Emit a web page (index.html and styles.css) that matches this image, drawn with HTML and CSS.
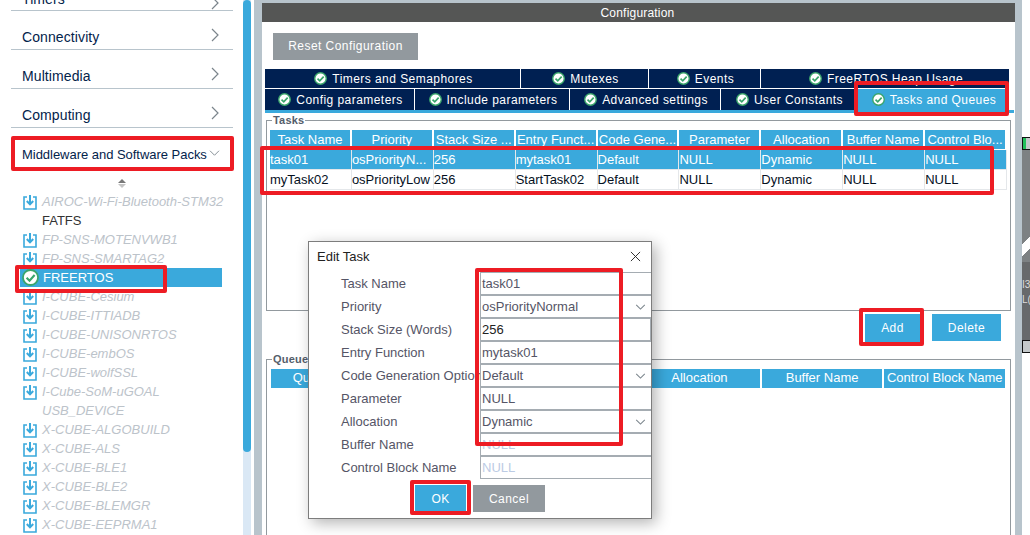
FILE: index.html
```html
<!DOCTYPE html>
<html lang="en">
<head>
    <meta charset="UTF-8">
    <meta name="viewport" content="width=device-width, initial-scale=1.0">
    <title>Edit Task</title>
    <link rel="stylesheet" href="styles.css">
</head>
<body>
    <svg class="defs" width="0" height="0">
        <symbol id="tick" viewBox="0 0 14 14">
            <circle cx="7" cy="7" r="6.2" fill="#fff" stroke="#3aa56b" stroke-width="1.5"/>
            <path d="M3.8 7.2 6.2 9.6 10.4 5" fill="none" stroke="#3aa56b" stroke-width="1.8"/>
        </symbol>
        <symbol id="pack" viewBox="0 0 14 16">
            <path d="M4 3H1v12h12V3h-3" fill="none" stroke="#3aa9dc" stroke-width="1.6"/>
            <path d="M7 1v9M3.8 7 7 10.4 10.2 7" fill="none" stroke="#3aa9dc" stroke-width="2"/>
        </symbol>
    </svg>

    <aside class="sidebar">
        <div class="cat cat-clipped"><span>Timers</span><svg class="chev" viewBox="0 0 8 14"><path d="M1 1l6 6-6 6"/></svg></div>
        <div class="cat"><span>Connectivity</span><svg class="chev" viewBox="0 0 8 14"><path d="M1 1l6 6-6 6"/></svg></div>
        <div class="cat"><span>Multimedia</span><svg class="chev" viewBox="0 0 8 14"><path d="M1 1l6 6-6 6"/></svg></div>
        <div class="cat"><span>Computing</span><svg class="chev" viewBox="0 0 8 14"><path d="M1 1l6 6-6 6"/></svg></div>
        <div class="cat cat-open"><span>Middleware and Software Packs</span><svg class="chev chev-down" viewBox="0 0 14 8"><path d="M1 1l6 6 6-6"/></svg></div>

        <div class="sorter"><i class="up"></i><i class="down"></i></div>
        <ul class="packs">
            <li><svg class="ico"><use href="#pack"/></svg>AIROC-Wi-Fi-Bluetooth-STM32</li>
            <li class="plain">FATFS</li>
            <li><svg class="ico"><use href="#pack"/></svg>FP-SNS-MOTENVWB1</li>
            <li><svg class="ico"><use href="#pack"/></svg>FP-SNS-SMARTAG2</li>
            <li class="selected"><svg class="ico ico-tick"><use href="#tick"/></svg>FREERTOS</li>
            <li><svg class="ico"><use href="#pack"/></svg>I-CUBE-Cesium</li>
            <li><svg class="ico"><use href="#pack"/></svg>I-CUBE-ITTIADB</li>
            <li><svg class="ico"><use href="#pack"/></svg>I-CUBE-UNISONRTOS</li>
            <li><svg class="ico"><use href="#pack"/></svg>I-CUBE-embOS</li>
            <li><svg class="ico"><use href="#pack"/></svg>I-CUBE-wolfSSL</li>
            <li><svg class="ico"><use href="#pack"/></svg>I-Cube-SoM-uGOAL</li>
            <li>USB_DEVICE</li>
            <li><svg class="ico"><use href="#pack"/></svg>X-CUBE-ALGOBUILD</li>
            <li><svg class="ico"><use href="#pack"/></svg>X-CUBE-ALS</li>
            <li><svg class="ico"><use href="#pack"/></svg>X-CUBE-BLE1</li>
            <li><svg class="ico"><use href="#pack"/></svg>X-CUBE-BLE2</li>
            <li><svg class="ico"><use href="#pack"/></svg>X-CUBE-BLEMGR</li>
            <li><svg class="ico"><use href="#pack"/></svg>X-CUBE-EEPRMA1</li>
        </ul>
    </aside>

    <div class="scrollbar"><div class="thumb"></div></div>

    <main class="config">
        <header class="config-title">Configuration</header>
        <button class="btn btn-grey btn-reset">Reset Configuration</button>

        <div class="tabs tabs-top">
            <div class="tab tab-a"><svg class="tick"><use href="#tick"/></svg>Timers and Semaphores</div>
            <div class="tab tab-b"><svg class="tick"><use href="#tick"/></svg>Mutexes</div>
            <div class="tab tab-c"><svg class="tick"><use href="#tick"/></svg>Events</div>
            <div class="tab tab-d"><svg class="tick"><use href="#tick"/></svg>FreeRTOS Heap Usage</div>
        </div>
        <div class="tabs tabs-bottom">
            <div class="tab tab-e"><svg class="tick"><use href="#tick"/></svg>Config parameters</div>
            <div class="tab tab-f"><svg class="tick"><use href="#tick"/></svg>Include parameters</div>
            <div class="tab tab-g"><svg class="tick"><use href="#tick"/></svg>Advanced settings</div>
            <div class="tab tab-h"><svg class="tick"><use href="#tick"/></svg>User Constants</div>
            <div class="tab tab-i active"><svg class="tick"><use href="#tick"/></svg>Tasks and Queues</div>
        </div>
        <div class="tabs-line"></div>

        <section class="group group-tasks">
            <span class="legend">Tasks</span>
            <div class="grid grid-tasks">
                <div class="th">Task Name</div><div class="th">Priority</div><div class="th">Stack Size ...</div><div class="th">Entry Funct...</div><div class="th">Code Gene...</div><div class="th">Parameter</div><div class="th">Allocation</div><div class="th">Buffer Name</div><div class="th">Control Blo...</div>
                <div class="td sel">task01</div><div class="td sel">osPriorityN...</div><div class="td sel">256</div><div class="td sel">mytask01</div><div class="td sel">Default</div><div class="td sel">NULL</div><div class="td sel">Dynamic</div><div class="td sel">NULL</div><div class="td sel">NULL</div>
                <div class="td">myTask02</div><div class="td">osPriorityLow</div><div class="td">256</div><div class="td">StartTask02</div><div class="td">Default</div><div class="td">NULL</div><div class="td">Dynamic</div><div class="td">NULL</div><div class="td">NULL</div>
            </div>
        </section>

        <div class="actions">
            <button class="btn btn-blue btn-add">Add</button>
            <button class="btn btn-blue btn-delete">Delete</button>
        </div>

        <section class="group group-queues">
            <span class="legend">Queues</span>
            <div class="grid grid-queues">
                <div class="th">Queue Name</div><div class="th">Queue Size</div><div class="th">Item Size</div><div class="th">Allocation</div><div class="th">Buffer Name</div><div class="th">Control Block Name</div>
            </div>
        </section>
    </main>

    <div class="gutter"></div>

    <div class="canvas">
        <div class="chip chip-green"></div>
        <div class="canvas-block"></div>
        <div class="canvas-pale"></div>
        <div class="canvas-block canvas-low">I3<br>L(</div>
        <div class="chip"></div>
    </div>

    <div class="dialog">
        <div class="dialog-title">Edit Task<svg class="close" viewBox="0 0 12 12"><path d="M1 1l10 10M11 1L1 11"/></svg></div>
        <div class="form">
            <label>Task Name</label><div class="field">task01</div>
            <label>Priority</label><div class="field select">osPriorityNormal<svg class="caret" viewBox="0 0 12 7"><path d="M1 1l5 5 5-5"/></svg></div>
            <label>Stack Size (Words)</label><div class="field focus">256</div>
            <label>Entry Function</label><div class="field">mytask01</div>
            <label>Code Generation Option</label><div class="field select">Default<svg class="caret" viewBox="0 0 12 7"><path d="M1 1l5 5 5-5"/></svg></div>
            <label>Parameter</label><div class="field">NULL</div>
            <label>Allocation</label><div class="field select">Dynamic<svg class="caret" viewBox="0 0 12 7"><path d="M1 1l5 5 5-5"/></svg></div>
            <label>Buffer Name</label><div class="field off">NULL</div>
            <label>Control Block Name</label><div class="field off">NULL</div>
        </div>
        <div class="dialog-actions">
            <button class="btn btn-blue btn-ok">OK</button>
            <button class="btn btn-grey btn-cancel">Cancel</button>
        </div>
    </div>

    <!-- red annotations drawn over the screenshot -->
    <div class="mark mark-middleware"></div>
    <div class="mark mark-freertos"></div>
    <div class="mark mark-tab"></div>
    <div class="mark mark-rows"></div>
    <div class="mark mark-add"></div>
    <div class="mark mark-fields"></div>
    <div class="mark mark-ok"></div>
</body>
</html>
```

FILE: styles.css
```css
* {
    box-sizing: border-box;
}

html, body {
    height: 100%;
}

body {
    margin: 0;
    height: 535px;
    overflow: hidden;
    position: relative;
    display: flex;
    background-color: #fff;
    font-family: 'Liberation Sans', Arial, sans-serif;
    font-size: 13px;
    color: #222;
}

.defs {
    position: absolute;
}

/* left column */
.sidebar {
    width: 243px;
    flex: none;
    padding: 0 10px 0 11px;
    overflow: hidden;
}

.cat {
    height: 39px;
    padding: 13px 14px 0 11px;
    display: flex;
    align-items: center;
    justify-content: space-between;
    border-bottom: 1px solid #b8c4cc;
    font-size: 14px;
    letter-spacing: 0.1px;
    color: #03234b;
}

.cat-clipped {
    height: 11px;
    padding-top: 0;
    align-items: flex-end;
}

.cat-clipped span {
    margin-bottom: 3px;
}

.cat-open {
    border-bottom: none;
    height: 36px;
    margin-top: 8px;
    padding: 0 13px 0 11px;
    font-size: 13px;
    letter-spacing: -0.03px;
    white-space: nowrap;
}

.chev {
    width: 8px;
    height: 14px;
    margin-top: -4px;
    fill: none;
    stroke: #7b858c;
    stroke-width: 1.2;
}

.chev-down {
    width: 11px;
    height: 6px;
    margin-top: -3px;
}

.sorter {
    height: 17px;
    margin: 3px 0 0 0;
    display: flex;
    flex-direction: column;
    align-items: center;
    padding: 4px 0 0 0;
    gap: 1px;
}

.sorter i {
    width: 0;
    height: 0;
    border-left: 4px solid transparent;
    border-right: 4px solid transparent;
}

.sorter .up {
    border-bottom: 4px solid #777;
}

.sorter .down {
    border-top: 4px solid #c4c4c4;
}

.packs {
    list-style: none;
    margin: 0;
    padding: 0;
}

.packs li {
    height: 19px;
    width: 211px;
    padding-left: 31px;
    position: relative;
    display: flex;
    align-items: center;
    font-style: italic;
    font-size: 13px;
    color: #bcc3ca;
    white-space: nowrap;
}

.packs li.plain {
    font-style: normal;
    color: #333;
}

.packs li.selected {
    width: 202px;
    margin-left: 9px;
    padding-left: 23px;
    font-style: normal;
    color: #fff;
    background-color: #3aa9dc;
}

.ico {
    position: absolute;
    left: 12px;
    top: 2px;
    width: 14px;
    height: 16px;
}

.ico-tick {
    left: 2px;
    top: 1px;
    width: 17px;
    height: 17px;
}

.scrollbar {
    width: 8px;
    flex: none;
    background-color: #dae8f5;
}

.thumb {
    height: 452px;
    background-color: #3aa9dc;
    border-radius: 4px;
}

/* main panel */
.config {
    width: 761px;
    flex: none;
    margin-left: 3px;
    border-left: 8px solid #b8c4cc;
    padding-top: 3px;
    background: linear-gradient(#b8c4cc 3px, #fff 3px);
}

.config-title {
    height: 19px;
    padding-top: 1px;
    padding-right: 2px;
    line-height: 19px;
    text-align: center;
    background-color: #555655;
    color: #fff;
    font-size: 12px;
    letter-spacing: 0.2px;
}

.btn {
    border: none;
    padding: 0;
    display: block;
    font-family: inherit;
    font-size: 12px;
    letter-spacing: 0.45px;
    color: #fff;
}

.btn-grey {
    background-color: #92999e;
}

.btn-blue {
    background-color: #3aa9dc;
}

.btn-reset {
    width: 145px;
    height: 27px;
    margin: 11px 0 0 11px;
    padding-bottom: 1px;
}

.tabs {
    display: flex;
    margin-left: 3px;
    width: 744px;
    background-color: #002052;
    color: #fff;
    font-size: 12px;
    letter-spacing: 0.45px;
}

.tabs-top {
    height: 19px;
    margin-top: 9px;
}

.tabs-bottom {
    height: 21px;
    margin-top: 1px;
}

.tab {
    display: flex;
    align-items: center;
    justify-content: center;
    padding-left: 2px;
    white-space: nowrap;
    border-right: 1px solid #fff;
}

.tab:last-child {
    border-right: none;
}

.tab-a { width: 256px; }
.tab-b { width: 128px; }
.tab-c { width: 112px; }
.tab-d { width: 248px; }
.tab-e { width: 150px; }
.tab-f { width: 155px; }
.tab-g { width: 151px; }
.tab-h { width: 136px; }
.tab-i { width: 152px; }

.tab.active {
    background-color: #3aa9dc;
}

.tick {
    width: 13px;
    height: 13px;
    margin-right: 5px;
}

.tabs-line {
    height: 3px;
    margin-left: 3px;
    width: 749px;
    background-color: #3aa9dc;
}

.group {
    position: relative;
    margin-left: 4px;
    width: 745px;
    border: 1px solid #92999e;
    padding: 9px 3px 0 3px;
}

.group-tasks {
    height: 191px;
    margin-top: 7px;
}

.group-queues {
    height: 200px;
    margin-top: 0;
}

.legend {
    position: absolute;
    left: 5px;
    top: -7px;
    padding: 0 1px;
    background-color: #fff;
    font-size: 11px;
    font-weight: bold;
    line-height: 12px;
    letter-spacing: 0.2px;
    color: #555e6b;
}

.grid {
    display: grid;
    font-size: 13px;
    white-space: nowrap;
}

.grid-tasks {
    grid-template-columns: repeat(9, 81.9px);
    grid-auto-rows: 20px;
}

.grid-queues {
    grid-template-columns: repeat(6, 122.7px);
    grid-auto-rows: 20px;
    margin-left: 1px;
}

.grid-queues .th {
    line-height: 17px;
}

.th {
    margin-right: 2px;
    margin-bottom: 1px;
    background-color: #3aa9dc;
    color: #fff;
    text-align: center;
    overflow: hidden;
    line-height: 19px;
}

.td {
    border-right: 1px solid #e4e7ea;
    border-bottom: 1px solid #e4e7ea;
    line-height: 19px;
    overflow: hidden;
    color: #05101e;
}

.td.sel {
    background-color: #3aa9dc;
    color: #fff;
    border-color: #e4e7ea;
}

.actions {
    height: 48px;
    display: flex;
    padding: 3px 0 0 603px;
    gap: 12px;
}

.btn-add {
    width: 55px;
    height: 28px;
}

.btn-delete {
    width: 69px;
    height: 27px;
}

.gutter {
    width: 7px;
    flex: none;
    background-color: #b8c4cc;
}

/* strip of the pinout view at the right edge */
.canvas {
    flex: 1;
    padding-top: 137px;
}

.chip {
    height: 13px;
    border: 1px solid #111;
    border-right: none;
    background-color: #c4c8ca;
}

.chip-green {
    background: linear-gradient(90deg, #22c05a 40%, #c4c8ca 40%);
}

.canvas-block {
    height: 72px;
    background-color: #7d8183;
}

.canvas-pale {
    height: 40px;
    background: linear-gradient(135deg, #7d8183 45%, #fff 45%, #fff 70%, #7d8183 70%);
}

.canvas-low {
    height: 78px;
    padding-top: 15px;
    line-height: 15px;
    font-size: 10px;
    color: #ddd;
    overflow: hidden;
    background-color: #67696b;
}

/* modal */
.dialog {
    position: absolute;
    left: 308px;
    top: 241px;
    width: 344px;
    height: 278px;
    background-color: #fff;
    border: 1px solid #7d7d7d;
    box-shadow: 4px 4px 14px rgba(0, 0, 0, 0.3);
}

.dialog-title {
    height: 30px;
    padding: 7px 0 0 8px;
    position: relative;
    font-size: 13px;
    color: #222;
}

.close {
    position: absolute;
    right: 10px;
    top: 9px;
    width: 11px;
    height: 11px;
    fill: none;
    stroke: #222;
    stroke-width: 1;
}

.form {
    display: grid;
    grid-template-columns: 171px 171px;
    grid-auto-rows: 23px;
    font-size: 13px;
}

.form label {
    padding-left: 32px;
    line-height: 24px;
    white-space: nowrap;
    overflow: hidden;
    color: #555566;
}

.field {
    position: relative;
    border: 1px solid #a5acb2;
    border-right: none;
    padding-left: 1px;
    line-height: 22px;
    color: #555566;
}

.field.focus {
    color: #222;
    border-right: 1px solid #a5acb2;
}

.field.off {
    color: #bccbe4;
}

.caret {
    position: absolute;
    right: 5px;
    top: 8px;
    width: 11px;
    height: 6px;
    fill: none;
    stroke: #7b858c;
    stroke-width: 1.2;
}

.dialog-actions {
    display: flex;
    gap: 7px;
    padding: 6px 0 0 106px;
}

.btn-ok {
    width: 51px;
    height: 27px;
}

.btn-cancel {
    width: 72px;
    height: 27px;
}

/* annotations */
.mark {
    position: absolute;
    border: 4px solid #ed1c24;
    border-radius: 2px;
}

.mark-middleware { left: 11px; top: 136px; width: 223px; height: 35px; }
.mark-freertos { left: 15px; top: 265px; width: 152px; height: 28px; }
.mark-tab { left: 854px; top: 81px; width: 155px; height: 35px; }
.mark-rows { left: 260px; top: 146px; width: 734px; height: 49px; }
.mark-add { left: 859px; top: 308px; width: 65px; height: 38px; }
.mark-fields { left: 475px; top: 268px; width: 148px; height: 178px; }
.mark-ok { left: 410px; top: 480px; width: 61px; height: 35px; }
```
